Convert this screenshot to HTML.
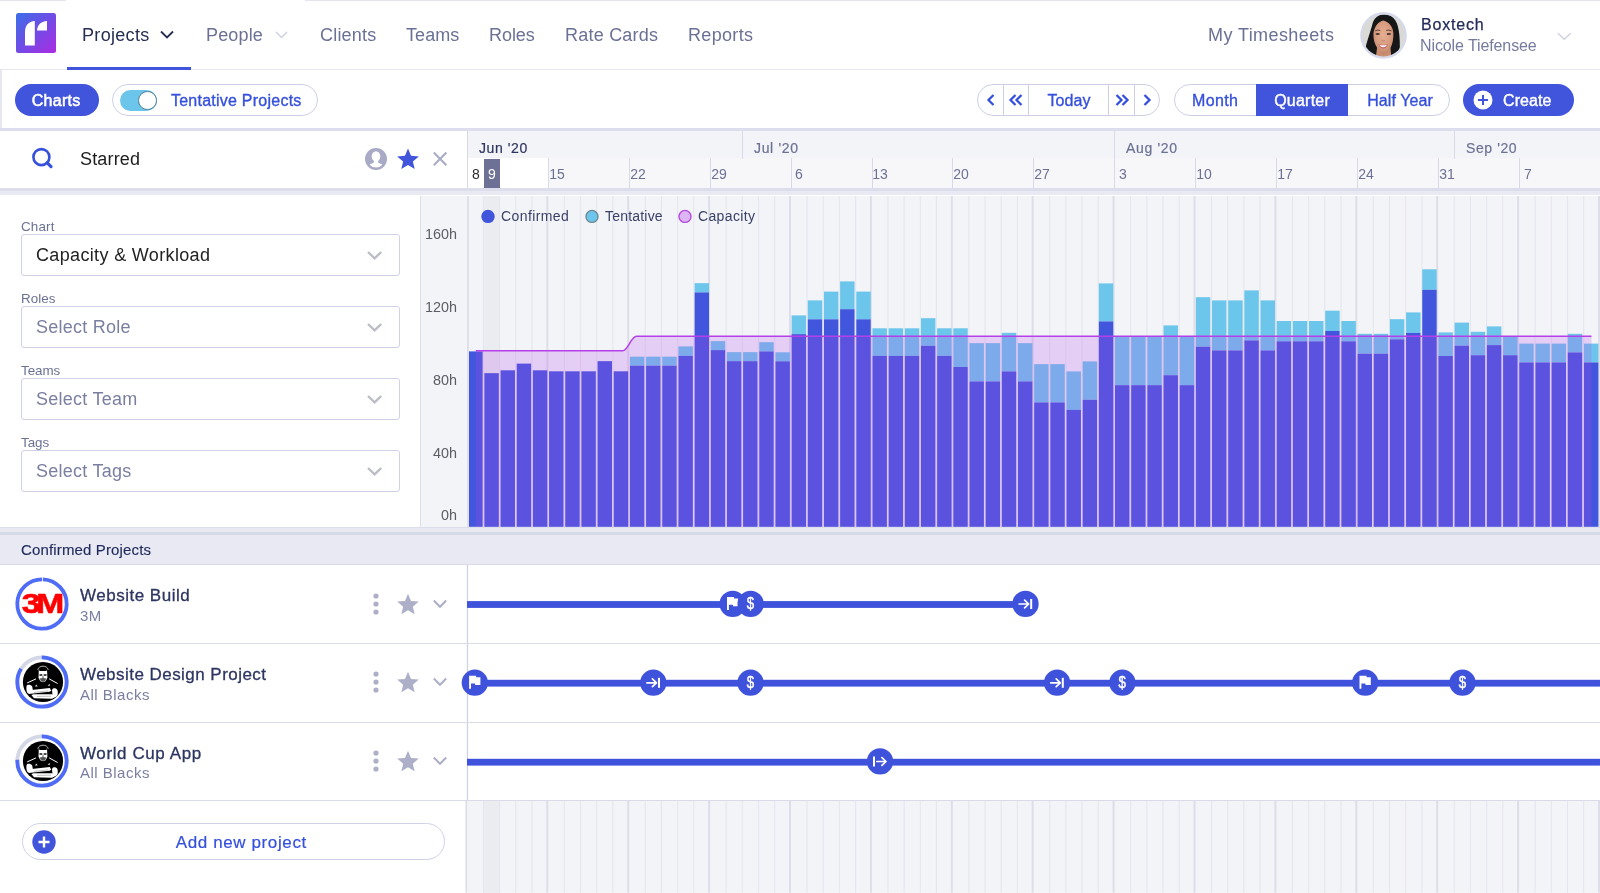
<!DOCTYPE html>
<html lang="en"><head><meta charset="utf-8"><title>Projects</title>
<style>
html,body{margin:0;padding:0;background:#fff;}
body{font-family:"Liberation Sans",sans-serif;-webkit-font-smoothing:antialiased;}
#app{position:relative;width:1600px;height:893px;overflow:hidden;background:#fff;}
#app>*{will-change:transform;}
#app svg{display:block;overflow:visible}
</style></head><body><div id="app">
<div style="position:absolute;left:0px;top:0px;width:66px;height:1px;background:#e4e5ee;"></div>
<div style="position:absolute;left:305px;top:0px;width:1295px;height:1px;background:#e4e5ee;"></div>
<svg style="position:absolute;left:16px;top:13px" width="40" height="40" viewBox="0 0 40 40">
<defs><linearGradient id="lg" x1="0" y1="0" x2="1" y2="1"><stop offset="0" stop-color="#3a6fe8"/><stop offset="0.45" stop-color="#6b4fe6"/><stop offset="1" stop-color="#ad2be2"/></linearGradient></defs>
<rect x="0" y="0" width="40" height="40" rx="2.5" fill="url(#lg)"/>
<path d="M9 32.5 V19 C9 12.5 12.5 8.3 18.8 8 V32.5 Z" fill="#fff"/>
<path d="M21 17.5 C21.3 12 24.8 8.4 31 8 V17.5 Z" fill="#fff"/>
</svg>
<div style="position:absolute;top:24.01px;line-height:22px;font-size:18px;color:#262d52;white-space:nowrap;left:82.00px;letter-spacing:0.314px;">Projects</div>
<svg style="position:absolute;left:159px;top:29px" width="16" height="12" viewBox="0 0 16 12"><path d="M2 2.5 L8 8.5 L14 2.5" fill="none" stroke="#262d52" stroke-width="1.8"/></svg>
<div style="position:absolute;top:24.01px;line-height:22px;font-size:18px;color:#6b7194;white-space:nowrap;left:205.60px;letter-spacing:0.150px;">People</div>
<svg style="position:absolute;left:274px;top:29px" width="16" height="12" viewBox="0 0 16 12"><path d="M2 3 L7.5 8.5 L13 3" fill="none" stroke="#cfd2e2" stroke-width="1.5"/></svg>
<div style="position:absolute;top:24.01px;line-height:22px;font-size:18px;color:#6b7194;white-space:nowrap;left:319.50px;letter-spacing:0.208px;">Clients</div>
<div style="position:absolute;top:24.01px;line-height:22px;font-size:18px;color:#6b7194;white-space:nowrap;left:406.25px;letter-spacing:0.062px;">Teams</div>
<div style="position:absolute;top:24.01px;line-height:22px;font-size:18px;color:#6b7194;white-space:nowrap;left:488.80px;letter-spacing:-0.062px;">Roles</div>
<div style="position:absolute;top:24.01px;line-height:22px;font-size:18px;color:#6b7194;white-space:nowrap;left:565.00px;letter-spacing:0.222px;">Rate Cards</div>
<div style="position:absolute;top:24.01px;line-height:22px;font-size:18px;color:#6b7194;white-space:nowrap;left:688.30px;letter-spacing:0.333px;">Reports</div>
<div style="position:absolute;left:0px;top:69px;width:1600px;height:1px;background:#e6e7f0;"></div>
<div style="position:absolute;left:67px;top:66.5px;width:124px;height:3px;background:#4154dc;"></div>
<div style="position:absolute;top:24.01px;line-height:22px;font-size:18px;color:#6b7194;white-space:nowrap;left:1207.50px;letter-spacing:0.417px;">My Timesheets</div>
<svg style="position:absolute;left:1360px;top:12px" width="47" height="47" viewBox="0 0 47 47">
<defs><clipPath id="av"><circle cx="23.5" cy="23.4" r="21"/></clipPath>
<filter id="avb" x="-10%" y="-10%" width="120%" height="120%"><feGaussianBlur stdDeviation="0.45"/></filter>
<radialGradient id="sk" cx="0.5" cy="0.42" r="0.62"><stop offset="0" stop-color="#e6ae92"/><stop offset="0.6" stop-color="#d79c80"/><stop offset="1" stop-color="#bd8064"/></radialGradient></defs>
<circle cx="23.5" cy="23.4" r="23.3" fill="#d6d9ea"/>
<g clip-path="url(#av)"><g filter="url(#avb)">
<rect width="47" height="47" fill="#d9dad6"/>
<path d="M24.7 2.6 C17.5 2.4 13.5 7 12.2 13 C10.5 19 8.2 26 6 33.5 C5.5 37.5 8.5 39.5 11 40.5 L18 45 L31 45 L35 41 C38 39.5 40.3 37 39.8 33.5 C39.8 27 39.5 21 38.2 16 C36.8 8 32 2.8 24.7 2.6 Z" fill="#141416"/>
<path d="M17 36 L30.5 36 L31.5 48 L15.5 48 Z" fill="#c98d70"/>
<path d="M23.3 8.4 C18.5 9.6 14.6 13.5 13.4 21.5 C13.2 27 14.5 32 17.5 36.5 C19.5 39.8 21.5 42.5 23.6 42.5 C26 42.5 28.5 39.8 30.3 36.5 C32.6 32 33.6 27 33.4 21 C32.8 14.5 29.5 10 23.3 8.4 Z" fill="url(#sk)"/>
<path d="M15.2 18.9 Q17.6 17.4 20.2 18.5 M26.2 18.5 Q28.8 17.4 31.4 18.9" stroke="#3a2a26" stroke-width="0.8" fill="none"/>
<ellipse cx="17.7" cy="22" rx="2.2" ry="1.05" fill="#4a3631"/>
<ellipse cx="28.8" cy="22" rx="2.2" ry="1.05" fill="#4a3631"/>
<path d="M21.6 28.6 Q23.2 29.6 24.8 28.6" stroke="#b87a60" stroke-width="0.8" fill="none"/>
<path d="M18.4 32.3 Q23.2 33.3 27.9 32.3 Q26.5 36.6 23.2 36.7 Q19.8 36.6 18.4 32.3 Z" fill="#c5676f"/>
<path d="M19.5 32.9 Q23.2 33.7 26.9 32.9 Q25.8 35.2 23.2 35.3 Q20.6 35.2 19.5 32.9 Z" fill="#fbf6f2"/>
</g></g></svg>
<div style="position:absolute;top:15.06px;line-height:20px;font-size:16px;color:#232b5a;white-space:nowrap;left:1420.60px;letter-spacing:0.804px;-webkit-text-stroke:0.25px #232b5a;">Boxtech</div>
<div style="position:absolute;top:35.86px;line-height:20px;font-size:16px;color:#767b9e;white-space:nowrap;left:1420.40px;letter-spacing:-0.103px;">Nicole Tiefensee</div>
<svg style="position:absolute;left:1556px;top:31px" width="16" height="11" viewBox="0 0 16 11"><path d="M2 2.2 L8.3 8.3 L14.6 2.2" fill="none" stroke="#cfd2e2" stroke-width="1.5"/></svg>
<div style="position:absolute;left:0px;top:70px;width:1.5px;height:58px;background:#e6e7f0;"></div>
<div style="position:absolute;left:0px;top:128px;width:1600px;height:2.6px;background:#dcdeed;"></div>
<div style="position:absolute;left:14.5px;top:84px;width:84px;height:32px;border-radius:16px;background:#4154dc"></div>
<div style="position:absolute;top:90.66px;line-height:20px;font-size:16px;color:#fff;white-space:nowrap;left:-143.70px;width:400px;text-align:center;letter-spacing:0.275px;text-indent:0.275px;-webkit-text-stroke:0.55px #fff;">Charts</div>
<div style="position:absolute;left:112px;top:84px;width:206px;height:32px;border-radius:16px;border:1px solid #cdd0e4;box-sizing:border-box;background:#fff"></div>
<div style="position:absolute;left:120px;top:89.5px;width:37px;height:21px;border-radius:10.5px;background:#6cc5ea"></div>
<div style="position:absolute;left:137.6px;top:90.6px;width:18.8px;height:18.8px;border-radius:50%;background:#fff;border:1.4px solid #4e7f98;box-sizing:border-box"></div>
<div style="position:absolute;top:90.76px;line-height:20px;font-size:16px;color:#3550dc;white-space:nowrap;left:170.60px;letter-spacing:0.238px;-webkit-text-stroke:0.35px #3550dc;">Tentative Projects</div>
<div style="position:absolute;left:977px;top:84px;width:183px;height:32px;border-radius:16px;border:1px solid #cdd0e4;box-sizing:border-box;background:#fff"></div>
<div style="position:absolute;left:1003.4px;top:85px;width:1px;height:30px;background:#cdd0e4;"></div>
<div style="position:absolute;left:1028.2px;top:85px;width:1px;height:30px;background:#cdd0e4;"></div>
<div style="position:absolute;left:1108.4px;top:85px;width:1px;height:30px;background:#cdd0e4;"></div>
<div style="position:absolute;left:1133.8px;top:85px;width:1px;height:30px;background:#cdd0e4;"></div>
<svg style="position:absolute;left:983px;top:92px" width="16" height="16" viewBox="-8 -8 16 16"><path d="M2.5 -5 L-2.5 0 L2.5 5" fill="none" stroke="#3550dc" stroke-width="2.3"/></svg>
<svg style="position:absolute;left:1005px;top:92px" width="16" height="16" viewBox="-8 -8 16 16"><path d="M2.5 -5 L-2.5 0 L2.5 5" fill="none" stroke="#3550dc" stroke-width="2.3"/></svg>
<svg style="position:absolute;left:1011px;top:92px" width="16" height="16" viewBox="-8 -8 16 16"><path d="M2.5 -5 L-2.5 0 L2.5 5" fill="none" stroke="#3550dc" stroke-width="2.3"/></svg>
<svg style="position:absolute;left:1111px;top:92px" width="16" height="16" viewBox="-8 -8 16 16"><path d="M-2.5 -5 L2.5 0 L-2.5 5" fill="none" stroke="#3550dc" stroke-width="2.3"/></svg>
<svg style="position:absolute;left:1117px;top:92px" width="16" height="16" viewBox="-8 -8 16 16"><path d="M-2.5 -5 L2.5 0 L-2.5 5" fill="none" stroke="#3550dc" stroke-width="2.3"/></svg>
<svg style="position:absolute;left:1139px;top:92px" width="16" height="16" viewBox="-8 -8 16 16"><path d="M-2.5 -5 L2.5 0 L-2.5 5" fill="none" stroke="#3550dc" stroke-width="2.3"/></svg>
<div style="position:absolute;top:90.76px;line-height:20px;font-size:16px;color:#3550dc;white-space:nowrap;left:868.60px;width:400px;text-align:center;letter-spacing:0.088px;text-indent:0.088px;-webkit-text-stroke:0.35px #3550dc;">Today</div>
<div style="position:absolute;left:1173.5px;top:84px;width:275.5px;height:32px;border-radius:16px;border:1px solid #cdd0e4;box-sizing:border-box;background:#fff"></div>
<div style="position:absolute;left:1256px;top:84px;width:92px;height:32px;background:#4154dc;"></div>
<div style="position:absolute;top:90.76px;line-height:20px;font-size:16px;color:#3550dc;white-space:nowrap;left:1014.60px;width:400px;text-align:center;letter-spacing:0.400px;text-indent:0.400px;-webkit-text-stroke:0.35px #3550dc;">Month</div>
<div style="position:absolute;top:90.76px;line-height:20px;font-size:16px;color:#fff;white-space:nowrap;left:1102.20px;width:400px;text-align:center;letter-spacing:0.242px;text-indent:0.242px;-webkit-text-stroke:0.4px #fff;">Quarter</div>
<div style="position:absolute;top:90.76px;line-height:20px;font-size:16px;color:#3550dc;white-space:nowrap;left:1199.70px;width:400px;text-align:center;letter-spacing:0.075px;text-indent:0.075px;-webkit-text-stroke:0.35px #3550dc;">Half Year</div>
<div style="position:absolute;left:1462.5px;top:84px;width:111px;height:32px;border-radius:16px;background:#4154dc"></div>
<svg style="position:absolute;left:1472.5px;top:90px" width="20" height="20" viewBox="-10 -10 20 20"><circle r="9.5" fill="#fff"/><path d="M-5 0 H5 M0 -5 V5" stroke="#4154dc" stroke-width="2" fill="none"/></svg>
<div style="position:absolute;top:90.76px;line-height:20px;font-size:16px;color:#fff;white-space:nowrap;left:1502.80px;letter-spacing:0.100px;-webkit-text-stroke:0.4px #fff;">Create</div>
<div style="position:absolute;left:468px;top:130.6px;width:1132px;height:27.6px;background:#f3f4f8;"></div>
<div style="position:absolute;left:468px;top:158.2px;width:1132px;height:29.8px;background:#f7f7fa;"></div>
<div style="position:absolute;left:468px;top:158.2px;width:80.39999999999998px;height:29.8px;background:#fff;"></div>
<div style="position:absolute;left:484.2px;top:158.5px;width:15.8px;height:29.5px;background:#6e7196;"></div>
<div style="position:absolute;left:466.8px;top:130.6px;width:1.3px;height:57.4px;background:#d6d8e8;"></div>
<div style="position:absolute;top:139.15px;line-height:18px;font-size:14px;color:#2d3561;white-space:nowrap;left:478.70px;letter-spacing:0.592px;-webkit-text-stroke:0.2px;">Jun '20</div>
<div style="position:absolute;left:742.2px;top:130.6px;width:1.1px;height:27.6px;background:#d8dae8;"></div>
<div style="position:absolute;top:139.15px;line-height:18px;font-size:14px;color:#6b7194;white-space:nowrap;left:753.76px;letter-spacing:0.667px;-webkit-text-stroke:0.2px;">Jul '20</div>
<div style="position:absolute;left:1114.2px;top:130.6px;width:1.1px;height:27.6px;background:#d8dae8;"></div>
<div style="position:absolute;top:139.15px;line-height:18px;font-size:14px;color:#6b7194;white-space:nowrap;left:1125.90px;letter-spacing:0.667px;-webkit-text-stroke:0.2px;">Aug '20</div>
<div style="position:absolute;left:1454.2px;top:130.6px;width:1.1px;height:27.6px;background:#d8dae8;"></div>
<div style="position:absolute;top:139.15px;line-height:18px;font-size:14px;color:#6b7194;white-space:nowrap;left:1465.68px;letter-spacing:0.583px;-webkit-text-stroke:0.2px;">Sep '20</div>
<div style="position:absolute;top:164.55px;line-height:18px;font-size:14px;color:#2b2b2b;white-space:nowrap;left:275.80px;width:400px;text-align:center;">8</div>
<div style="position:absolute;left:547.9px;top:158.2px;width:1.1px;height:29.8px;background:#d8dae8;"></div>
<div style="position:absolute;top:164.55px;line-height:18px;font-size:14px;color:#6b7194;white-space:nowrap;left:356.70px;width:400px;text-align:center;">15</div>
<div style="position:absolute;left:628.8px;top:158.2px;width:1.1px;height:29.8px;background:#d8dae8;"></div>
<div style="position:absolute;top:164.55px;line-height:18px;font-size:14px;color:#6b7194;white-space:nowrap;left:437.60px;width:400px;text-align:center;">22</div>
<div style="position:absolute;left:709.7px;top:158.2px;width:1.1px;height:29.8px;background:#d8dae8;"></div>
<div style="position:absolute;top:164.55px;line-height:18px;font-size:14px;color:#6b7194;white-space:nowrap;left:518.50px;width:400px;text-align:center;">29</div>
<div style="position:absolute;left:790.6px;top:158.2px;width:1.1px;height:29.8px;background:#d8dae8;"></div>
<div style="position:absolute;top:164.55px;line-height:18px;font-size:14px;color:#6b7194;white-space:nowrap;left:599.40px;width:400px;text-align:center;">6</div>
<div style="position:absolute;left:871.5px;top:158.2px;width:1.1px;height:29.8px;background:#d8dae8;"></div>
<div style="position:absolute;top:164.55px;line-height:18px;font-size:14px;color:#6b7194;white-space:nowrap;left:680.30px;width:400px;text-align:center;">13</div>
<div style="position:absolute;left:952.4px;top:158.2px;width:1.1px;height:29.8px;background:#d8dae8;"></div>
<div style="position:absolute;top:164.55px;line-height:18px;font-size:14px;color:#6b7194;white-space:nowrap;left:761.20px;width:400px;text-align:center;">20</div>
<div style="position:absolute;left:1033.3px;top:158.2px;width:1.1px;height:29.8px;background:#d8dae8;"></div>
<div style="position:absolute;top:164.55px;line-height:18px;font-size:14px;color:#6b7194;white-space:nowrap;left:842.10px;width:400px;text-align:center;">27</div>
<div style="position:absolute;left:1114.2px;top:158.2px;width:1.1px;height:29.8px;background:#d8dae8;"></div>
<div style="position:absolute;top:164.55px;line-height:18px;font-size:14px;color:#6b7194;white-space:nowrap;left:923.00px;width:400px;text-align:center;">3</div>
<div style="position:absolute;left:1195.1px;top:158.2px;width:1.1px;height:29.8px;background:#d8dae8;"></div>
<div style="position:absolute;top:164.55px;line-height:18px;font-size:14px;color:#6b7194;white-space:nowrap;left:1003.90px;width:400px;text-align:center;">10</div>
<div style="position:absolute;left:1276.0px;top:158.2px;width:1.1px;height:29.8px;background:#d8dae8;"></div>
<div style="position:absolute;top:164.55px;line-height:18px;font-size:14px;color:#6b7194;white-space:nowrap;left:1084.80px;width:400px;text-align:center;">17</div>
<div style="position:absolute;left:1356.9px;top:158.2px;width:1.1px;height:29.8px;background:#d8dae8;"></div>
<div style="position:absolute;top:164.55px;line-height:18px;font-size:14px;color:#6b7194;white-space:nowrap;left:1165.70px;width:400px;text-align:center;">24</div>
<div style="position:absolute;left:1437.8px;top:158.2px;width:1.1px;height:29.8px;background:#d8dae8;"></div>
<div style="position:absolute;top:164.55px;line-height:18px;font-size:14px;color:#6b7194;white-space:nowrap;left:1246.60px;width:400px;text-align:center;">31</div>
<div style="position:absolute;left:1518.7px;top:158.2px;width:1.1px;height:29.8px;background:#d8dae8;"></div>
<div style="position:absolute;top:164.55px;line-height:18px;font-size:14px;color:#6b7194;white-space:nowrap;left:1327.50px;width:400px;text-align:center;">7</div>
<div style="position:absolute;top:164.55px;line-height:18px;font-size:14px;color:#fff;white-space:nowrap;left:291.98px;width:400px;text-align:center;">9</div>
<svg style="position:absolute;left:468px;top:195.6px" width="1132" height="331" viewBox="468 195.6 1132 331"><rect x="468" y="195.6" width="1132" height="331" fill="#f3f4f7"/><rect x="483.38" y="195.6" width="16.3" height="331" fill="#ebecef"/><rect x="465.40" y="195.6" width="2" height="331.0" fill="#dddee9"/><rect x="482.88" y="195.6" width="1.1" height="331.0" fill="#e5e6ef"/><rect x="499.06" y="195.6" width="1.1" height="331.0" fill="#e5e6ef"/><rect x="515.24" y="195.6" width="1.1" height="331.0" fill="#e5e6ef"/><rect x="531.42" y="195.6" width="1.1" height="331.0" fill="#e5e6ef"/><rect x="546.30" y="195.6" width="2" height="331.0" fill="#dddee9"/><rect x="563.78" y="195.6" width="1.1" height="331.0" fill="#e5e6ef"/><rect x="579.96" y="195.6" width="1.1" height="331.0" fill="#e5e6ef"/><rect x="596.14" y="195.6" width="1.1" height="331.0" fill="#e5e6ef"/><rect x="612.32" y="195.6" width="1.1" height="331.0" fill="#e5e6ef"/><rect x="627.20" y="195.6" width="2" height="331.0" fill="#dddee9"/><rect x="644.68" y="195.6" width="1.1" height="331.0" fill="#e5e6ef"/><rect x="660.86" y="195.6" width="1.1" height="331.0" fill="#e5e6ef"/><rect x="677.04" y="195.6" width="1.1" height="331.0" fill="#e5e6ef"/><rect x="693.22" y="195.6" width="1.1" height="331.0" fill="#e5e6ef"/><rect x="708.10" y="195.6" width="2" height="331.0" fill="#dddee9"/><rect x="725.58" y="195.6" width="1.1" height="331.0" fill="#e5e6ef"/><rect x="741.76" y="195.6" width="1.1" height="331.0" fill="#e5e6ef"/><rect x="757.94" y="195.6" width="1.1" height="331.0" fill="#e5e6ef"/><rect x="774.12" y="195.6" width="1.1" height="331.0" fill="#e5e6ef"/><rect x="789.00" y="195.6" width="2" height="331.0" fill="#dddee9"/><rect x="806.48" y="195.6" width="1.1" height="331.0" fill="#e5e6ef"/><rect x="822.66" y="195.6" width="1.1" height="331.0" fill="#e5e6ef"/><rect x="838.84" y="195.6" width="1.1" height="331.0" fill="#e5e6ef"/><rect x="855.02" y="195.6" width="1.1" height="331.0" fill="#e5e6ef"/><rect x="869.90" y="195.6" width="2" height="331.0" fill="#dddee9"/><rect x="887.38" y="195.6" width="1.1" height="331.0" fill="#e5e6ef"/><rect x="903.56" y="195.6" width="1.1" height="331.0" fill="#e5e6ef"/><rect x="919.74" y="195.6" width="1.1" height="331.0" fill="#e5e6ef"/><rect x="935.92" y="195.6" width="1.1" height="331.0" fill="#e5e6ef"/><rect x="950.80" y="195.6" width="2" height="331.0" fill="#dddee9"/><rect x="968.28" y="195.6" width="1.1" height="331.0" fill="#e5e6ef"/><rect x="984.46" y="195.6" width="1.1" height="331.0" fill="#e5e6ef"/><rect x="1000.64" y="195.6" width="1.1" height="331.0" fill="#e5e6ef"/><rect x="1016.82" y="195.6" width="1.1" height="331.0" fill="#e5e6ef"/><rect x="1031.70" y="195.6" width="2" height="331.0" fill="#dddee9"/><rect x="1049.18" y="195.6" width="1.1" height="331.0" fill="#e5e6ef"/><rect x="1065.36" y="195.6" width="1.1" height="331.0" fill="#e5e6ef"/><rect x="1081.54" y="195.6" width="1.1" height="331.0" fill="#e5e6ef"/><rect x="1097.72" y="195.6" width="1.1" height="331.0" fill="#e5e6ef"/><rect x="1112.60" y="195.6" width="2" height="331.0" fill="#dddee9"/><rect x="1130.08" y="195.6" width="1.1" height="331.0" fill="#e5e6ef"/><rect x="1146.26" y="195.6" width="1.1" height="331.0" fill="#e5e6ef"/><rect x="1162.44" y="195.6" width="1.1" height="331.0" fill="#e5e6ef"/><rect x="1178.62" y="195.6" width="1.1" height="331.0" fill="#e5e6ef"/><rect x="1193.50" y="195.6" width="2" height="331.0" fill="#dddee9"/><rect x="1210.98" y="195.6" width="1.1" height="331.0" fill="#e5e6ef"/><rect x="1227.16" y="195.6" width="1.1" height="331.0" fill="#e5e6ef"/><rect x="1243.34" y="195.6" width="1.1" height="331.0" fill="#e5e6ef"/><rect x="1259.52" y="195.6" width="1.1" height="331.0" fill="#e5e6ef"/><rect x="1274.40" y="195.6" width="2" height="331.0" fill="#dddee9"/><rect x="1291.88" y="195.6" width="1.1" height="331.0" fill="#e5e6ef"/><rect x="1308.06" y="195.6" width="1.1" height="331.0" fill="#e5e6ef"/><rect x="1324.24" y="195.6" width="1.1" height="331.0" fill="#e5e6ef"/><rect x="1340.42" y="195.6" width="1.1" height="331.0" fill="#e5e6ef"/><rect x="1355.30" y="195.6" width="2" height="331.0" fill="#dddee9"/><rect x="1372.78" y="195.6" width="1.1" height="331.0" fill="#e5e6ef"/><rect x="1388.96" y="195.6" width="1.1" height="331.0" fill="#e5e6ef"/><rect x="1405.14" y="195.6" width="1.1" height="331.0" fill="#e5e6ef"/><rect x="1421.32" y="195.6" width="1.1" height="331.0" fill="#e5e6ef"/><rect x="1436.20" y="195.6" width="2" height="331.0" fill="#dddee9"/><rect x="1453.68" y="195.6" width="1.1" height="331.0" fill="#e5e6ef"/><rect x="1469.86" y="195.6" width="1.1" height="331.0" fill="#e5e6ef"/><rect x="1486.04" y="195.6" width="1.1" height="331.0" fill="#e5e6ef"/><rect x="1502.22" y="195.6" width="1.1" height="331.0" fill="#e5e6ef"/><rect x="1517.10" y="195.6" width="2" height="331.0" fill="#dddee9"/><rect x="1534.58" y="195.6" width="1.1" height="331.0" fill="#e5e6ef"/><rect x="1550.76" y="195.6" width="1.1" height="331.0" fill="#e5e6ef"/><rect x="1566.94" y="195.6" width="1.1" height="331.0" fill="#e5e6ef"/><rect x="1583.12" y="195.6" width="1.1" height="331.0" fill="#e5e6ef"/><rect x="1598.00" y="195.6" width="2" height="331.0" fill="#dddee9"/><rect x="468.20" y="351" width="14.45" height="175.40" fill="#4156dc"/><rect x="484.37" y="372.75" width="14.45" height="153.65" fill="#4156dc"/><rect x="500.54" y="369.9" width="14.45" height="156.50" fill="#4156dc"/><rect x="516.71" y="363.2" width="14.45" height="163.20" fill="#4156dc"/><rect x="532.88" y="369.9" width="14.45" height="156.50" fill="#4156dc"/><rect x="549.05" y="370.9" width="14.45" height="155.50" fill="#4156dc"/><rect x="565.22" y="370.9" width="14.45" height="155.50" fill="#4156dc"/><rect x="581.39" y="370.9" width="14.45" height="155.50" fill="#4156dc"/><rect x="597.56" y="360.75" width="14.45" height="165.65" fill="#4156dc"/><rect x="613.73" y="370.9" width="14.45" height="155.50" fill="#4156dc"/><rect x="629.90" y="356.25" width="14.45" height="9.00" fill="#6cc5ea"/><rect x="629.90" y="365.25" width="14.45" height="161.15" fill="#4156dc"/><rect x="646.07" y="356.25" width="14.45" height="9.00" fill="#6cc5ea"/><rect x="646.07" y="365.25" width="14.45" height="161.15" fill="#4156dc"/><rect x="662.24" y="356.25" width="14.45" height="9.00" fill="#6cc5ea"/><rect x="662.24" y="365.25" width="14.45" height="161.15" fill="#4156dc"/><rect x="678.41" y="346" width="14.45" height="9.50" fill="#6cc5ea"/><rect x="678.41" y="355.5" width="14.45" height="170.90" fill="#4156dc"/><rect x="694.58" y="282.75" width="14.45" height="9.25" fill="#6cc5ea"/><rect x="694.58" y="292" width="14.45" height="234.40" fill="#4156dc"/><rect x="710.75" y="340.7" width="14.45" height="9.00" fill="#6cc5ea"/><rect x="710.75" y="349.7" width="14.45" height="176.70" fill="#4156dc"/><rect x="726.92" y="351.75" width="14.45" height="9.00" fill="#6cc5ea"/><rect x="726.92" y="360.75" width="14.45" height="165.65" fill="#4156dc"/><rect x="743.09" y="351.75" width="14.45" height="9.00" fill="#6cc5ea"/><rect x="743.09" y="360.75" width="14.45" height="165.65" fill="#4156dc"/><rect x="759.26" y="341.8" width="14.45" height="9.20" fill="#6cc5ea"/><rect x="759.26" y="351" width="14.45" height="175.40" fill="#4156dc"/><rect x="775.43" y="351.9" width="14.45" height="9.00" fill="#6cc5ea"/><rect x="775.43" y="360.9" width="14.45" height="165.50" fill="#4156dc"/><rect x="791.60" y="315" width="14.45" height="18.75" fill="#6cc5ea"/><rect x="791.60" y="333.75" width="14.45" height="192.65" fill="#4156dc"/><rect x="807.77" y="300" width="14.45" height="18.90" fill="#6cc5ea"/><rect x="807.77" y="318.9" width="14.45" height="207.50" fill="#4156dc"/><rect x="823.94" y="291.2" width="14.45" height="27.70" fill="#6cc5ea"/><rect x="823.94" y="318.9" width="14.45" height="207.50" fill="#4156dc"/><rect x="840.11" y="281" width="14.45" height="27.80" fill="#6cc5ea"/><rect x="840.11" y="308.8" width="14.45" height="217.60" fill="#4156dc"/><rect x="856.28" y="291.2" width="14.45" height="27.70" fill="#6cc5ea"/><rect x="856.28" y="318.9" width="14.45" height="207.50" fill="#4156dc"/><rect x="872.45" y="327.9" width="14.45" height="27.60" fill="#6cc5ea"/><rect x="872.45" y="355.5" width="14.45" height="170.90" fill="#4156dc"/><rect x="888.62" y="327.9" width="14.45" height="27.60" fill="#6cc5ea"/><rect x="888.62" y="355.5" width="14.45" height="170.90" fill="#4156dc"/><rect x="904.79" y="327.9" width="14.45" height="27.60" fill="#6cc5ea"/><rect x="904.79" y="355.5" width="14.45" height="170.90" fill="#4156dc"/><rect x="920.96" y="317.8" width="14.45" height="27.60" fill="#6cc5ea"/><rect x="920.96" y="345.4" width="14.45" height="181.00" fill="#4156dc"/><rect x="937.13" y="327.9" width="14.45" height="27.60" fill="#6cc5ea"/><rect x="937.13" y="355.5" width="14.45" height="170.90" fill="#4156dc"/><rect x="953.30" y="327.9" width="14.45" height="38.70" fill="#6cc5ea"/><rect x="953.30" y="366.6" width="14.45" height="159.80" fill="#4156dc"/><rect x="969.47" y="342.75" width="14.45" height="38.25" fill="#6cc5ea"/><rect x="969.47" y="381" width="14.45" height="145.40" fill="#4156dc"/><rect x="985.64" y="342.75" width="14.45" height="38.25" fill="#6cc5ea"/><rect x="985.64" y="381" width="14.45" height="145.40" fill="#4156dc"/><rect x="1001.81" y="332.4" width="14.45" height="38.60" fill="#6cc5ea"/><rect x="1001.81" y="371" width="14.45" height="155.40" fill="#4156dc"/><rect x="1017.98" y="342.75" width="14.45" height="38.25" fill="#6cc5ea"/><rect x="1017.98" y="381" width="14.45" height="145.40" fill="#4156dc"/><rect x="1034.15" y="363.75" width="14.45" height="38.25" fill="#6cc5ea"/><rect x="1034.15" y="402" width="14.45" height="124.40" fill="#4156dc"/><rect x="1050.32" y="363.75" width="14.45" height="38.25" fill="#6cc5ea"/><rect x="1050.32" y="402" width="14.45" height="124.40" fill="#4156dc"/><rect x="1066.49" y="371" width="14.45" height="38.50" fill="#6cc5ea"/><rect x="1066.49" y="409.5" width="14.45" height="116.90" fill="#4156dc"/><rect x="1082.66" y="361" width="14.45" height="38.40" fill="#6cc5ea"/><rect x="1082.66" y="399.4" width="14.45" height="127.00" fill="#4156dc"/><rect x="1098.83" y="283" width="14.45" height="38.00" fill="#6cc5ea"/><rect x="1098.83" y="321" width="14.45" height="205.40" fill="#4156dc"/><rect x="1115.00" y="336" width="14.45" height="48.75" fill="#6cc5ea"/><rect x="1115.00" y="384.75" width="14.45" height="141.65" fill="#4156dc"/><rect x="1131.17" y="336" width="14.45" height="48.75" fill="#6cc5ea"/><rect x="1131.17" y="384.75" width="14.45" height="141.65" fill="#4156dc"/><rect x="1147.34" y="336" width="14.45" height="48.75" fill="#6cc5ea"/><rect x="1147.34" y="384.75" width="14.45" height="141.65" fill="#4156dc"/><rect x="1163.51" y="325" width="14.45" height="49.80" fill="#6cc5ea"/><rect x="1163.51" y="374.8" width="14.45" height="151.60" fill="#4156dc"/><rect x="1179.68" y="336" width="14.45" height="48.75" fill="#6cc5ea"/><rect x="1179.68" y="384.75" width="14.45" height="141.65" fill="#4156dc"/><rect x="1195.85" y="296.8" width="14.45" height="49.50" fill="#6cc5ea"/><rect x="1195.85" y="346.3" width="14.45" height="180.10" fill="#4156dc"/><rect x="1212.02" y="300" width="14.45" height="50.00" fill="#6cc5ea"/><rect x="1212.02" y="350" width="14.45" height="176.40" fill="#4156dc"/><rect x="1228.19" y="300" width="14.45" height="50.00" fill="#6cc5ea"/><rect x="1228.19" y="350" width="14.45" height="176.40" fill="#4156dc"/><rect x="1244.36" y="290" width="14.45" height="50.00" fill="#6cc5ea"/><rect x="1244.36" y="340" width="14.45" height="186.40" fill="#4156dc"/><rect x="1260.53" y="300" width="14.45" height="50.00" fill="#6cc5ea"/><rect x="1260.53" y="350" width="14.45" height="176.40" fill="#4156dc"/><rect x="1276.70" y="320.6" width="14.45" height="20.30" fill="#6cc5ea"/><rect x="1276.70" y="340.9" width="14.45" height="185.50" fill="#4156dc"/><rect x="1292.87" y="320.6" width="14.45" height="20.30" fill="#6cc5ea"/><rect x="1292.87" y="340.9" width="14.45" height="185.50" fill="#4156dc"/><rect x="1309.04" y="320.6" width="14.45" height="20.30" fill="#6cc5ea"/><rect x="1309.04" y="340.9" width="14.45" height="185.50" fill="#4156dc"/><rect x="1325.21" y="310.3" width="14.45" height="20.30" fill="#6cc5ea"/><rect x="1325.21" y="330.6" width="14.45" height="195.80" fill="#4156dc"/><rect x="1341.38" y="320.6" width="14.45" height="20.30" fill="#6cc5ea"/><rect x="1341.38" y="340.9" width="14.45" height="185.50" fill="#4156dc"/><rect x="1357.55" y="333.4" width="14.45" height="19.90" fill="#6cc5ea"/><rect x="1357.55" y="353.3" width="14.45" height="173.10" fill="#4156dc"/><rect x="1373.72" y="333.4" width="14.45" height="19.90" fill="#6cc5ea"/><rect x="1373.72" y="353.3" width="14.45" height="173.10" fill="#4156dc"/><rect x="1389.89" y="318.8" width="14.45" height="20.10" fill="#6cc5ea"/><rect x="1389.89" y="338.9" width="14.45" height="187.50" fill="#4156dc"/><rect x="1406.06" y="312" width="14.45" height="20.50" fill="#6cc5ea"/><rect x="1406.06" y="332.5" width="14.45" height="193.90" fill="#4156dc"/><rect x="1422.23" y="268.9" width="14.45" height="20.50" fill="#6cc5ea"/><rect x="1422.23" y="289.4" width="14.45" height="237.00" fill="#4156dc"/><rect x="1438.40" y="332" width="14.45" height="23.60" fill="#6cc5ea"/><rect x="1438.40" y="355.6" width="14.45" height="170.80" fill="#4156dc"/><rect x="1454.57" y="322.2" width="14.45" height="23.05" fill="#6cc5ea"/><rect x="1454.57" y="345.25" width="14.45" height="181.15" fill="#4156dc"/><rect x="1470.74" y="331.4" width="14.45" height="23.40" fill="#6cc5ea"/><rect x="1470.74" y="354.8" width="14.45" height="171.60" fill="#4156dc"/><rect x="1486.91" y="326" width="14.45" height="18.70" fill="#6cc5ea"/><rect x="1486.91" y="344.7" width="14.45" height="181.70" fill="#4156dc"/><rect x="1503.08" y="336" width="14.45" height="18.80" fill="#6cc5ea"/><rect x="1503.08" y="354.8" width="14.45" height="171.60" fill="#4156dc"/><rect x="1519.25" y="343.2" width="14.45" height="18.80" fill="#6cc5ea"/><rect x="1519.25" y="362" width="14.45" height="164.40" fill="#4156dc"/><rect x="1535.42" y="343.2" width="14.45" height="18.80" fill="#6cc5ea"/><rect x="1535.42" y="362" width="14.45" height="164.40" fill="#4156dc"/><rect x="1551.59" y="343.2" width="14.45" height="18.80" fill="#6cc5ea"/><rect x="1551.59" y="362" width="14.45" height="164.40" fill="#4156dc"/><rect x="1567.76" y="333.4" width="14.45" height="18.60" fill="#6cc5ea"/><rect x="1567.76" y="352" width="14.45" height="174.40" fill="#4156dc"/><rect x="1583.93" y="343.2" width="14.45" height="18.80" fill="#6cc5ea"/><rect x="1583.93" y="362" width="14.45" height="164.40" fill="#4156dc"/><rect x="468" y="351" width="1" height="175.39999999999998" fill="#1a3fe0"/><path d="M475.8 350.35 L622.7 350.35 C628 350.35 631 335.8 636.5 335.8 L1591.5 335.8 L1591.5 526.4 L475.8 526.4 Z" fill="rgba(185,75,238,0.225)"/><path d="M475.8 350.35 L622.7 350.35 C628 350.35 631 335.8 636.5 335.8 L1591.5 335.8" fill="none" stroke="#b540ea" stroke-width="1.5"/><circle cx="488" cy="216" r="6.7" fill="#4154dc"/><circle cx="592" cy="216" r="6" fill="#6cc5ea" stroke="#6e8a98" stroke-width="1.4"/><circle cx="685" cy="216" r="6" fill="#ddb5f4" stroke="#b44be0" stroke-width="1.4"/></svg>
<div style="position:absolute;top:207.15px;line-height:18px;font-size:14px;color:#3a4068;white-space:nowrap;left:501.00px;letter-spacing:0.409px;">Confirmed</div>
<div style="position:absolute;top:207.15px;line-height:18px;font-size:14px;color:#3a4068;white-space:nowrap;left:604.60px;letter-spacing:0.200px;">Tentative</div>
<div style="position:absolute;top:207.15px;line-height:18px;font-size:14px;color:#3a4068;white-space:nowrap;left:697.60px;letter-spacing:0.357px;">Capacity</div>
<svg style="position:absolute;left:460px;top:565.4px" width="1140" height="327.6" viewBox="460 565.4 1140 327.6"><rect x="468" y="801.3" width="1132" height="92" fill="#f3f4f7"/><rect x="483.38" y="801.3" width="16.3" height="92" fill="#ebecef"/><rect x="465.40" y="801.3" width="2" height="91.70000000000005" fill="#dddee9"/><rect x="482.88" y="801.3" width="1.1" height="91.70000000000005" fill="#e5e6ef"/><rect x="499.06" y="801.3" width="1.1" height="91.70000000000005" fill="#e5e6ef"/><rect x="515.24" y="801.3" width="1.1" height="91.70000000000005" fill="#e5e6ef"/><rect x="531.42" y="801.3" width="1.1" height="91.70000000000005" fill="#e5e6ef"/><rect x="546.30" y="801.3" width="2" height="91.70000000000005" fill="#dddee9"/><rect x="563.78" y="801.3" width="1.1" height="91.70000000000005" fill="#e5e6ef"/><rect x="579.96" y="801.3" width="1.1" height="91.70000000000005" fill="#e5e6ef"/><rect x="596.14" y="801.3" width="1.1" height="91.70000000000005" fill="#e5e6ef"/><rect x="612.32" y="801.3" width="1.1" height="91.70000000000005" fill="#e5e6ef"/><rect x="627.20" y="801.3" width="2" height="91.70000000000005" fill="#dddee9"/><rect x="644.68" y="801.3" width="1.1" height="91.70000000000005" fill="#e5e6ef"/><rect x="660.86" y="801.3" width="1.1" height="91.70000000000005" fill="#e5e6ef"/><rect x="677.04" y="801.3" width="1.1" height="91.70000000000005" fill="#e5e6ef"/><rect x="693.22" y="801.3" width="1.1" height="91.70000000000005" fill="#e5e6ef"/><rect x="708.10" y="801.3" width="2" height="91.70000000000005" fill="#dddee9"/><rect x="725.58" y="801.3" width="1.1" height="91.70000000000005" fill="#e5e6ef"/><rect x="741.76" y="801.3" width="1.1" height="91.70000000000005" fill="#e5e6ef"/><rect x="757.94" y="801.3" width="1.1" height="91.70000000000005" fill="#e5e6ef"/><rect x="774.12" y="801.3" width="1.1" height="91.70000000000005" fill="#e5e6ef"/><rect x="789.00" y="801.3" width="2" height="91.70000000000005" fill="#dddee9"/><rect x="806.48" y="801.3" width="1.1" height="91.70000000000005" fill="#e5e6ef"/><rect x="822.66" y="801.3" width="1.1" height="91.70000000000005" fill="#e5e6ef"/><rect x="838.84" y="801.3" width="1.1" height="91.70000000000005" fill="#e5e6ef"/><rect x="855.02" y="801.3" width="1.1" height="91.70000000000005" fill="#e5e6ef"/><rect x="869.90" y="801.3" width="2" height="91.70000000000005" fill="#dddee9"/><rect x="887.38" y="801.3" width="1.1" height="91.70000000000005" fill="#e5e6ef"/><rect x="903.56" y="801.3" width="1.1" height="91.70000000000005" fill="#e5e6ef"/><rect x="919.74" y="801.3" width="1.1" height="91.70000000000005" fill="#e5e6ef"/><rect x="935.92" y="801.3" width="1.1" height="91.70000000000005" fill="#e5e6ef"/><rect x="950.80" y="801.3" width="2" height="91.70000000000005" fill="#dddee9"/><rect x="968.28" y="801.3" width="1.1" height="91.70000000000005" fill="#e5e6ef"/><rect x="984.46" y="801.3" width="1.1" height="91.70000000000005" fill="#e5e6ef"/><rect x="1000.64" y="801.3" width="1.1" height="91.70000000000005" fill="#e5e6ef"/><rect x="1016.82" y="801.3" width="1.1" height="91.70000000000005" fill="#e5e6ef"/><rect x="1031.70" y="801.3" width="2" height="91.70000000000005" fill="#dddee9"/><rect x="1049.18" y="801.3" width="1.1" height="91.70000000000005" fill="#e5e6ef"/><rect x="1065.36" y="801.3" width="1.1" height="91.70000000000005" fill="#e5e6ef"/><rect x="1081.54" y="801.3" width="1.1" height="91.70000000000005" fill="#e5e6ef"/><rect x="1097.72" y="801.3" width="1.1" height="91.70000000000005" fill="#e5e6ef"/><rect x="1112.60" y="801.3" width="2" height="91.70000000000005" fill="#dddee9"/><rect x="1130.08" y="801.3" width="1.1" height="91.70000000000005" fill="#e5e6ef"/><rect x="1146.26" y="801.3" width="1.1" height="91.70000000000005" fill="#e5e6ef"/><rect x="1162.44" y="801.3" width="1.1" height="91.70000000000005" fill="#e5e6ef"/><rect x="1178.62" y="801.3" width="1.1" height="91.70000000000005" fill="#e5e6ef"/><rect x="1193.50" y="801.3" width="2" height="91.70000000000005" fill="#dddee9"/><rect x="1210.98" y="801.3" width="1.1" height="91.70000000000005" fill="#e5e6ef"/><rect x="1227.16" y="801.3" width="1.1" height="91.70000000000005" fill="#e5e6ef"/><rect x="1243.34" y="801.3" width="1.1" height="91.70000000000005" fill="#e5e6ef"/><rect x="1259.52" y="801.3" width="1.1" height="91.70000000000005" fill="#e5e6ef"/><rect x="1274.40" y="801.3" width="2" height="91.70000000000005" fill="#dddee9"/><rect x="1291.88" y="801.3" width="1.1" height="91.70000000000005" fill="#e5e6ef"/><rect x="1308.06" y="801.3" width="1.1" height="91.70000000000005" fill="#e5e6ef"/><rect x="1324.24" y="801.3" width="1.1" height="91.70000000000005" fill="#e5e6ef"/><rect x="1340.42" y="801.3" width="1.1" height="91.70000000000005" fill="#e5e6ef"/><rect x="1355.30" y="801.3" width="2" height="91.70000000000005" fill="#dddee9"/><rect x="1372.78" y="801.3" width="1.1" height="91.70000000000005" fill="#e5e6ef"/><rect x="1388.96" y="801.3" width="1.1" height="91.70000000000005" fill="#e5e6ef"/><rect x="1405.14" y="801.3" width="1.1" height="91.70000000000005" fill="#e5e6ef"/><rect x="1421.32" y="801.3" width="1.1" height="91.70000000000005" fill="#e5e6ef"/><rect x="1436.20" y="801.3" width="2" height="91.70000000000005" fill="#dddee9"/><rect x="1453.68" y="801.3" width="1.1" height="91.70000000000005" fill="#e5e6ef"/><rect x="1469.86" y="801.3" width="1.1" height="91.70000000000005" fill="#e5e6ef"/><rect x="1486.04" y="801.3" width="1.1" height="91.70000000000005" fill="#e5e6ef"/><rect x="1502.22" y="801.3" width="1.1" height="91.70000000000005" fill="#e5e6ef"/><rect x="1517.10" y="801.3" width="2" height="91.70000000000005" fill="#dddee9"/><rect x="1534.58" y="801.3" width="1.1" height="91.70000000000005" fill="#e5e6ef"/><rect x="1550.76" y="801.3" width="1.1" height="91.70000000000005" fill="#e5e6ef"/><rect x="1566.94" y="801.3" width="1.1" height="91.70000000000005" fill="#e5e6ef"/><rect x="1583.12" y="801.3" width="1.1" height="91.70000000000005" fill="#e5e6ef"/><rect x="1598.00" y="801.3" width="2" height="91.70000000000005" fill="#dddee9"/><rect x="466.8" y="565.4" width="1.3" height="236" fill="#cfd2e6"/><rect x="467" y="601.50" width="558" height="6.8" fill="#3f52dc"/><g transform="translate(732.7,603.8)"><circle r="13.15" cy="0.5" fill="#3f52dc"/><path d="M-5.7 -6.4 H1.2 L1.5 -5 H5.6 V2.9 H0.4 L0.1 1.4 H-3.8 V6.5 H-5.7 Z" fill="#fff"/></g><g transform="translate(750.6,603.8)"><circle r="13.15" cy="0.5" fill="#3f52dc"/></g><text transform="translate(750.5,609.4) scale(0.8,1)" text-anchor="middle" font-family="Liberation Sans, sans-serif" font-size="16.6" fill="#fff" stroke="#fff" stroke-width="0.45">$</text><g transform="translate(1025.5,603.8)"><circle r="13.15" cy="0.5" fill="#3f52dc"/><g transform="translate(0,0.6)"><path d="M-6.4 0 H3 M-0.9 -3.9 L3.2 0 L-0.9 3.9" fill="none" stroke="#fff" stroke-width="1.7" stroke-linecap="round" stroke-linejoin="round"/><path d="M5.7 -5 V5" stroke="#fff" stroke-width="2" fill="none"/></g></g><rect x="470" y="680.20" width="1130" height="6.8" fill="#3f52dc"/><g transform="translate(474.8,682.6)"><circle r="13.15" cy="0.5" fill="#3f52dc"/><path d="M-5.7 -6.4 H1.2 L1.5 -5 H5.6 V2.9 H0.4 L0.1 1.4 H-3.8 V6.5 H-5.7 Z" fill="#fff"/></g><g transform="translate(653.3,682.6)"><circle r="13.15" cy="0.5" fill="#3f52dc"/><g transform="translate(0,0.6)"><path d="M-6.4 0 H3 M-0.9 -3.9 L3.2 0 L-0.9 3.9" fill="none" stroke="#fff" stroke-width="1.7" stroke-linecap="round" stroke-linejoin="round"/><path d="M5.7 -5 V5" stroke="#fff" stroke-width="2" fill="none"/></g></g><g transform="translate(750.5,682.6)"><circle r="13.15" cy="0.5" fill="#3f52dc"/></g><text transform="translate(750.4,688.2) scale(0.8,1)" text-anchor="middle" font-family="Liberation Sans, sans-serif" font-size="16.6" fill="#fff" stroke="#fff" stroke-width="0.45">$</text><g transform="translate(1057.1,682.6)"><circle r="13.15" cy="0.5" fill="#3f52dc"/><g transform="translate(0,0.6)"><path d="M-6.4 0 H3 M-0.9 -3.9 L3.2 0 L-0.9 3.9" fill="none" stroke="#fff" stroke-width="1.7" stroke-linecap="round" stroke-linejoin="round"/><path d="M5.7 -5 V5" stroke="#fff" stroke-width="2" fill="none"/></g></g><g transform="translate(1122.4,682.6)"><circle r="13.15" cy="0.5" fill="#3f52dc"/></g><text transform="translate(1122.3000000000002,688.2) scale(0.8,1)" text-anchor="middle" font-family="Liberation Sans, sans-serif" font-size="16.6" fill="#fff" stroke="#fff" stroke-width="0.45">$</text><g transform="translate(1365.2,682.6)"><circle r="13.15" cy="0.5" fill="#3f52dc"/><path d="M-5.7 -6.4 H1.2 L1.5 -5 H5.6 V2.9 H0.4 L0.1 1.4 H-3.8 V6.5 H-5.7 Z" fill="#fff"/></g><g transform="translate(1462.5,682.6)"><circle r="13.15" cy="0.5" fill="#3f52dc"/></g><text transform="translate(1462.4,688.2) scale(0.8,1)" text-anchor="middle" font-family="Liberation Sans, sans-serif" font-size="16.6" fill="#fff" stroke="#fff" stroke-width="0.45">$</text><rect x="467" y="759.20" width="1133" height="6.8" fill="#3f52dc"/><g transform="translate(880,761.3)"><circle r="13.15" cy="0.5" fill="#3f52dc"/><g transform="translate(0,0.6)"><path d="M-3.2 0 H5.8 M1.9 -3.9 L6 0 L1.9 3.9" fill="none" stroke="#fff" stroke-width="1.7" stroke-linecap="round" stroke-linejoin="round"/><path d="M-6 -5 V5" stroke="#fff" stroke-width="2" fill="none"/></g></g></svg>
<svg style="position:absolute;left:28px;top:144px" width="30" height="30" viewBox="0 0 30 30"><circle cx="13.4" cy="13.1" r="8" fill="none" stroke="#3550dc" stroke-width="2.6"/><path d="M19.3 18.9 L23 22.6" stroke="#3550dc" stroke-width="3.2" stroke-linecap="round"/></svg>
<div style="position:absolute;top:148.16px;line-height:22px;font-size:18px;color:#1c1c1c;white-space:nowrap;left:80.00px;letter-spacing:0.167px;">Starred</div>
<svg style="position:absolute;left:365px;top:147.6px" width="22" height="22" viewBox="0 0 22 22">
<defs><clipPath id="pc"><circle cx="11" cy="11" r="8.6"/></clipPath></defs>
<circle cx="11" cy="11" r="11" fill="#a9abc6"/>
<g clip-path="url(#pc)"><ellipse cx="11" cy="8.4" rx="4.3" ry="5.2" fill="#fff"/><path d="M2 22 C2.5 16.5 6.5 16.2 8.8 14.6 L9 12 L13 12 L13.2 14.6 C15.5 16.2 19.5 16.5 20 22 Z" fill="#fff"/></g>
</svg>
<svg style="position:absolute;left:394px;top:145px" width="28" height="28" viewBox="0 0 28 28"><polygon points="14.00,3.50 17.02,10.75 24.84,11.38 18.88,16.49 20.70,24.12 14.00,20.03 7.30,24.12 9.12,16.49 3.16,11.38 10.98,10.75" fill="#4154dc"/></svg>
<svg style="position:absolute;left:430px;top:149px" width="20" height="20" viewBox="0 0 20 20"><path d="M3.8 3.5 L16.4 16.2 M16.4 3.5 L3.8 16.2" stroke="#a9abc6" stroke-width="2" fill="none"/></svg>
<div style="position:absolute;left:0px;top:188px;width:1600px;height:3.2px;background:#dcdeec;"></div>
<div style="position:absolute;left:0px;top:191.2px;width:1600px;height:4.4px;background:#e8e9f3;"></div>
<div style="position:absolute;top:217.66px;line-height:17px;font-size:13.4px;color:#6b7194;white-space:nowrap;left:21.00px;letter-spacing:0.172px;">Chart</div>
<div style="position:absolute;left:21px;top:234px;width:379px;height:42px;border:1px solid #cfd2e4;border-radius:3px;box-sizing:border-box;background:#fff"></div>
<div style="position:absolute;top:244.16px;line-height:22px;font-size:18px;color:#222;white-space:nowrap;left:35.80px;letter-spacing:0.347px;">Capacity &amp; Workload</div>
<svg style="position:absolute;left:365px;top:248px" width="20" height="14" viewBox="0 0 20 14"><path d="M3 4 L9.6 10.4 L16.2 4" fill="none" stroke="#bdbdc6" stroke-width="2.4"/></svg>
<div style="position:absolute;top:289.66px;line-height:17px;font-size:13.4px;color:#6b7194;white-space:nowrap;left:21.00px;letter-spacing:0.046px;">Roles</div>
<div style="position:absolute;left:21px;top:306px;width:379px;height:42px;border:1px solid #cfd2e4;border-radius:3px;box-sizing:border-box;background:#fff"></div>
<div style="position:absolute;top:316.16px;line-height:22px;font-size:18px;color:#7a7fa0;white-space:nowrap;left:35.80px;letter-spacing:0.240px;">Select Role</div>
<svg style="position:absolute;left:365px;top:320px" width="20" height="14" viewBox="0 0 20 14"><path d="M3 4 L9.6 10.4 L16.2 4" fill="none" stroke="#bdbdc6" stroke-width="2.4"/></svg>
<div style="position:absolute;top:361.66px;line-height:17px;font-size:13.4px;color:#6b7194;white-space:nowrap;left:21.00px;letter-spacing:-0.037px;">Teams</div>
<div style="position:absolute;left:21px;top:378px;width:379px;height:42px;border:1px solid #cfd2e4;border-radius:3px;box-sizing:border-box;background:#fff"></div>
<div style="position:absolute;top:388.16px;line-height:22px;font-size:18px;color:#7a7fa0;white-space:nowrap;left:35.80px;letter-spacing:0.255px;">Select Team</div>
<svg style="position:absolute;left:365px;top:392px" width="20" height="14" viewBox="0 0 20 14"><path d="M3 4 L9.6 10.4 L16.2 4" fill="none" stroke="#bdbdc6" stroke-width="2.4"/></svg>
<div style="position:absolute;top:433.66px;line-height:17px;font-size:13.4px;color:#6b7194;white-space:nowrap;left:21.00px;letter-spacing:-0.068px;">Tags</div>
<div style="position:absolute;left:21px;top:450px;width:379px;height:42px;border:1px solid #cfd2e4;border-radius:3px;box-sizing:border-box;background:#fff"></div>
<div style="position:absolute;top:460.16px;line-height:22px;font-size:18px;color:#7a7fa0;white-space:nowrap;left:35.80px;letter-spacing:0.255px;">Select Tags</div>
<svg style="position:absolute;left:365px;top:464px" width="20" height="14" viewBox="0 0 20 14"><path d="M3 4 L9.6 10.4 L16.2 4" fill="none" stroke="#bdbdc6" stroke-width="2.4"/></svg>
<div style="position:absolute;left:420px;top:195.6px;width:48px;height:331px;background:#f3f4f7;"></div>
<div style="position:absolute;left:420px;top:195.6px;width:1px;height:331px;background:#dcdeec;"></div>
<div style="position:absolute;left:466.6px;top:195.6px;width:1.5px;height:331px;background:#dfe0ea;"></div>
<div style="position:absolute;top:224.61px;line-height:18px;font-size:14.4px;color:#5b5d66;white-space:nowrap;right:1142.80px;text-align:right;">160h</div>
<div style="position:absolute;top:297.61px;line-height:18px;font-size:14.4px;color:#5b5d66;white-space:nowrap;right:1142.80px;text-align:right;">120h</div>
<div style="position:absolute;top:370.61px;line-height:18px;font-size:14.4px;color:#5b5d66;white-space:nowrap;right:1142.80px;text-align:right;">80h</div>
<div style="position:absolute;top:444.11px;line-height:18px;font-size:14.4px;color:#5b5d66;white-space:nowrap;right:1142.80px;text-align:right;">40h</div>
<div style="position:absolute;top:505.61px;line-height:18px;font-size:14.4px;color:#5b5d66;white-space:nowrap;right:1142.80px;text-align:right;">0h</div>
<div style="position:absolute;left:0px;top:526.6px;width:1600px;height:1.4px;background:#dcdeea;"></div>
<div style="position:absolute;left:0px;top:528px;width:1600px;height:4.2px;background:#e8e9f2;"></div>
<div style="position:absolute;left:0px;top:532.2px;width:1600px;height:2.6px;background:#d6d9e6;"></div>
<div style="position:absolute;left:0px;top:534.8px;width:1600px;height:29.4px;background:#e8e9f3;"></div>
<div style="position:absolute;left:0px;top:564.2px;width:1600px;height:1.2px;background:#d9dbe8;"></div>
<div style="position:absolute;top:540.00px;line-height:19px;font-size:15px;color:#1f2a5c;white-space:nowrap;left:21.00px;letter-spacing:0.147px;-webkit-text-stroke:0.15px #1f2a5c;">Confirmed Projects</div>
<svg style="position:absolute;left:13.399999999999999px;top:574.8px" width="58" height="58" viewBox="-29 -29 58 58"><circle r="24.7" fill="none" stroke="#4f6cf6" stroke-width="3.8" stroke-dasharray="153.33 155.19" transform="rotate(-88)"/></svg>
<div style="position:absolute;left:1px;width:80px;text-align:center;top:586.5999999999999px;line-height:34px;font-size:28px;font-weight:bold;color:#f00;letter-spacing:-3.4px;transform:scaleX(1.2);-webkit-text-stroke:0.6px #f00">3M</div>
<div style="position:absolute;top:584.71px;line-height:21px;font-size:17px;color:#2d3561;white-space:nowrap;left:80.20px;letter-spacing:0.506px;-webkit-text-stroke:0.3px #2d3561;">Website Build</div>
<div style="position:absolute;top:605.90px;line-height:19px;font-size:15px;color:#7a7fa0;white-space:nowrap;left:80.00px;letter-spacing:0.525px;">3M</div>
<svg style="position:absolute;left:371px;top:590.8px" width="10" height="26" viewBox="-5 -13 10 26"><circle cy="-8" r="2.6" fill="#adafc9"/><circle cy="0" r="2.6" fill="#adafc9"/><circle cy="8" r="2.6" fill="#adafc9"/></svg>
<svg style="position:absolute;left:394px;top:589.8px" width="28" height="28" viewBox="0 0 28 28"><polygon points="14.00,3.80 16.99,10.99 24.75,11.61 18.84,16.67 20.64,24.24 14.00,20.19 7.36,24.24 9.16,16.67 3.25,11.61 11.01,10.99" fill="#adafc9"/></svg>
<svg style="position:absolute;left:430px;top:595.8px" width="20" height="16" viewBox="0 0 20 16"><path d="M3.8 4.5 L10 10.8 L16.2 4.5" fill="none" stroke="#adafc9" stroke-width="2"/></svg>
<svg style="position:absolute;left:13.399999999999999px;top:653.4px" width="58" height="58" viewBox="-29 -29 58 58"><circle r="24.7" fill="none" stroke="#d4d7e6" stroke-width="3.8"/><circle r="24.7" fill="none" stroke="#4f6cf6" stroke-width="3.8" stroke-dasharray="129.74 155.19" transform="rotate(-90.5)"/></svg>
<svg style="position:absolute;left:22.799999999999997px;top:662.4px" width="40" height="40" viewBox="-20 -20 40 40">
<defs><clipPath id="bc682"><circle r="19.9"/></clipPath></defs>
<circle r="20.1" fill="#000"/>
<g clip-path="url(#bc682)">
<path d="M-4.2 -12.6 H4 L4.4 -4.2 L2.6 -0.7 L0 0.2 L-2.6 -0.7 L-4.5 -4.2 Z" fill="#fff"/>
<path d="M-5.2 -12.2 C-4.6 -17 4.6 -17 5.2 -12.2" fill="none" stroke="#fff" stroke-width="0.7"/>
<path d="M-3.9 -12.8 C-2 -14.6 2 -14.6 3.9 -12.8 L3.6 -11 H-3.6 Z" fill="#000"/>
<path d="M-3.5 -7.7 H-0.7 V-6.3 H-3.5 Z M0.7 -7.7 H3.5 V-6.3 H0.7 Z" fill="#111"/>
<path d="M-0.6 -6.3 H0.6 L1 -3.9 H-1 Z" fill="#999"/>
<path d="M-3.3 -3.4 C-1.5 -4.2 1.5 -4.2 3.3 -3.4 L2.2 -0.9 L0 -0.1 L-2.2 -0.9 Z" fill="#555"/>
<path d="M-15.8 0.9 L-7 -3.1 M6.2 -3.1 L14.6 1.5" fill="none" stroke="#fff" stroke-width="1"/>
<path d="M-6.8 2.6 L-5.2 4.6 H-8 Z M4.6 3.2 L7.2 2 L6.4 4.2 Z" fill="#ddd"/>
<g fill="#fff">
<path d="M-16.4 4 C-16.2 2.2 -12 2.4 -10.8 4.6 L-10 9 L-15.4 11.2 C-16.8 9 -16.8 6 -16.4 4 Z"/>
<path d="M-15.8 8.4 L6.8 6.1 L8.3 8.7 L6.5 9.7 L-14.4 12.1 Z"/>
<path d="M9 8 C9.6 5.8 13.2 5.8 14.4 8 C15.1 10.5 14.9 13 13.8 14.9 L9.4 12.2 Z"/>
<path d="M-11.6 13 L-9.4 12.3 L12.6 12.3 L13.6 14.6 L9 16.7 L-9 16.3 Z"/>
</g>
<path d="M-9 10.4 L5 8.9 M-6 14.4 L8 14.2" stroke="#000" stroke-width="0.5" opacity="0.5"/>
</g>
</svg>
<div style="position:absolute;top:664.06px;line-height:21px;font-size:17px;color:#2d3561;white-space:nowrap;left:80.20px;letter-spacing:0.458px;-webkit-text-stroke:0.3px #2d3561;">Website Design Project</div>
<div style="position:absolute;top:684.50px;line-height:19px;font-size:15px;color:#7a7fa0;white-space:nowrap;left:80.00px;letter-spacing:0.489px;">All Blacks</div>
<svg style="position:absolute;left:371px;top:669.4px" width="10" height="26" viewBox="-5 -13 10 26"><circle cy="-8" r="2.6" fill="#adafc9"/><circle cy="0" r="2.6" fill="#adafc9"/><circle cy="8" r="2.6" fill="#adafc9"/></svg>
<svg style="position:absolute;left:394px;top:668.4px" width="28" height="28" viewBox="0 0 28 28"><polygon points="14.00,3.80 16.99,10.99 24.75,11.61 18.84,16.67 20.64,24.24 14.00,20.19 7.36,24.24 9.16,16.67 3.25,11.61 11.01,10.99" fill="#adafc9"/></svg>
<svg style="position:absolute;left:430px;top:674.4px" width="20" height="16" viewBox="0 0 20 16"><path d="M3.8 4.5 L10 10.8 L16.2 4.5" fill="none" stroke="#adafc9" stroke-width="2"/></svg>
<svg style="position:absolute;left:13.399999999999999px;top:732px" width="58" height="58" viewBox="-29 -29 58 58"><circle r="24.7" fill="none" stroke="#d4d7e6" stroke-width="3.8"/><circle r="24.7" fill="none" stroke="#4f6cf6" stroke-width="3.8" stroke-dasharray="117.17 155.19" transform="rotate(-90.5)"/></svg>
<svg style="position:absolute;left:22.799999999999997px;top:741px" width="40" height="40" viewBox="-20 -20 40 40">
<defs><clipPath id="bc761"><circle r="19.9"/></clipPath></defs>
<circle r="20.1" fill="#000"/>
<g clip-path="url(#bc761)">
<path d="M-4.2 -12.6 H4 L4.4 -4.2 L2.6 -0.7 L0 0.2 L-2.6 -0.7 L-4.5 -4.2 Z" fill="#fff"/>
<path d="M-5.2 -12.2 C-4.6 -17 4.6 -17 5.2 -12.2" fill="none" stroke="#fff" stroke-width="0.7"/>
<path d="M-3.9 -12.8 C-2 -14.6 2 -14.6 3.9 -12.8 L3.6 -11 H-3.6 Z" fill="#000"/>
<path d="M-3.5 -7.7 H-0.7 V-6.3 H-3.5 Z M0.7 -7.7 H3.5 V-6.3 H0.7 Z" fill="#111"/>
<path d="M-0.6 -6.3 H0.6 L1 -3.9 H-1 Z" fill="#999"/>
<path d="M-3.3 -3.4 C-1.5 -4.2 1.5 -4.2 3.3 -3.4 L2.2 -0.9 L0 -0.1 L-2.2 -0.9 Z" fill="#555"/>
<path d="M-15.8 0.9 L-7 -3.1 M6.2 -3.1 L14.6 1.5" fill="none" stroke="#fff" stroke-width="1"/>
<path d="M-6.8 2.6 L-5.2 4.6 H-8 Z M4.6 3.2 L7.2 2 L6.4 4.2 Z" fill="#ddd"/>
<g fill="#fff">
<path d="M-16.4 4 C-16.2 2.2 -12 2.4 -10.8 4.6 L-10 9 L-15.4 11.2 C-16.8 9 -16.8 6 -16.4 4 Z"/>
<path d="M-15.8 8.4 L6.8 6.1 L8.3 8.7 L6.5 9.7 L-14.4 12.1 Z"/>
<path d="M9 8 C9.6 5.8 13.2 5.8 14.4 8 C15.1 10.5 14.9 13 13.8 14.9 L9.4 12.2 Z"/>
<path d="M-11.6 13 L-9.4 12.3 L12.6 12.3 L13.6 14.6 L9 16.7 L-9 16.3 Z"/>
</g>
<path d="M-9 10.4 L5 8.9 M-6 14.4 L8 14.2" stroke="#000" stroke-width="0.5" opacity="0.5"/>
</g>
</svg>
<div style="position:absolute;top:742.66px;line-height:21px;font-size:17px;color:#2d3561;white-space:nowrap;left:80.20px;letter-spacing:0.600px;-webkit-text-stroke:0.3px #2d3561;">World Cup App</div>
<div style="position:absolute;top:763.10px;line-height:19px;font-size:15px;color:#7a7fa0;white-space:nowrap;left:80.00px;letter-spacing:0.489px;">All Blacks</div>
<svg style="position:absolute;left:371px;top:748px" width="10" height="26" viewBox="-5 -13 10 26"><circle cy="-8" r="2.6" fill="#adafc9"/><circle cy="0" r="2.6" fill="#adafc9"/><circle cy="8" r="2.6" fill="#adafc9"/></svg>
<svg style="position:absolute;left:394px;top:747px" width="28" height="28" viewBox="0 0 28 28"><polygon points="14.00,3.80 16.99,10.99 24.75,11.61 18.84,16.67 20.64,24.24 14.00,20.19 7.36,24.24 9.16,16.67 3.25,11.61 11.01,10.99" fill="#adafc9"/></svg>
<svg style="position:absolute;left:430px;top:753px" width="20" height="16" viewBox="0 0 20 16"><path d="M3.8 4.5 L10 10.8 L16.2 4.5" fill="none" stroke="#adafc9" stroke-width="2"/></svg>
<div style="position:absolute;left:0px;top:643.2px;width:1600px;height:1.1px;background:#d9dbe8;"></div>
<div style="position:absolute;left:0px;top:722px;width:1600px;height:1.1px;background:#d9dbe8;"></div>
<div style="position:absolute;left:0px;top:800.2px;width:1600px;height:1.1px;background:#d9dbe8;"></div>
<div style="position:absolute;left:21.6px;top:823px;width:423px;height:36.5px;border-radius:18.5px;border:1px solid #cfd2e6;box-sizing:border-box;background:#fff"></div>
<svg style="position:absolute;left:32px;top:829.5px" width="24" height="24" viewBox="-12 -12 24 24"><circle r="11.7" fill="#4154dc"/><path d="M-5.5 0 H5.5 M0 -5.5 V5.5" stroke="#fff" stroke-width="2.4" fill="none"/></svg>
<div style="position:absolute;top:831.61px;line-height:21px;font-size:17px;color:#3550dc;white-space:nowrap;left:40.70px;width:400px;text-align:center;letter-spacing:0.616px;text-indent:0.616px;-webkit-text-stroke:0.2px #3550dc;">Add new project</div>
</div></body></html>
